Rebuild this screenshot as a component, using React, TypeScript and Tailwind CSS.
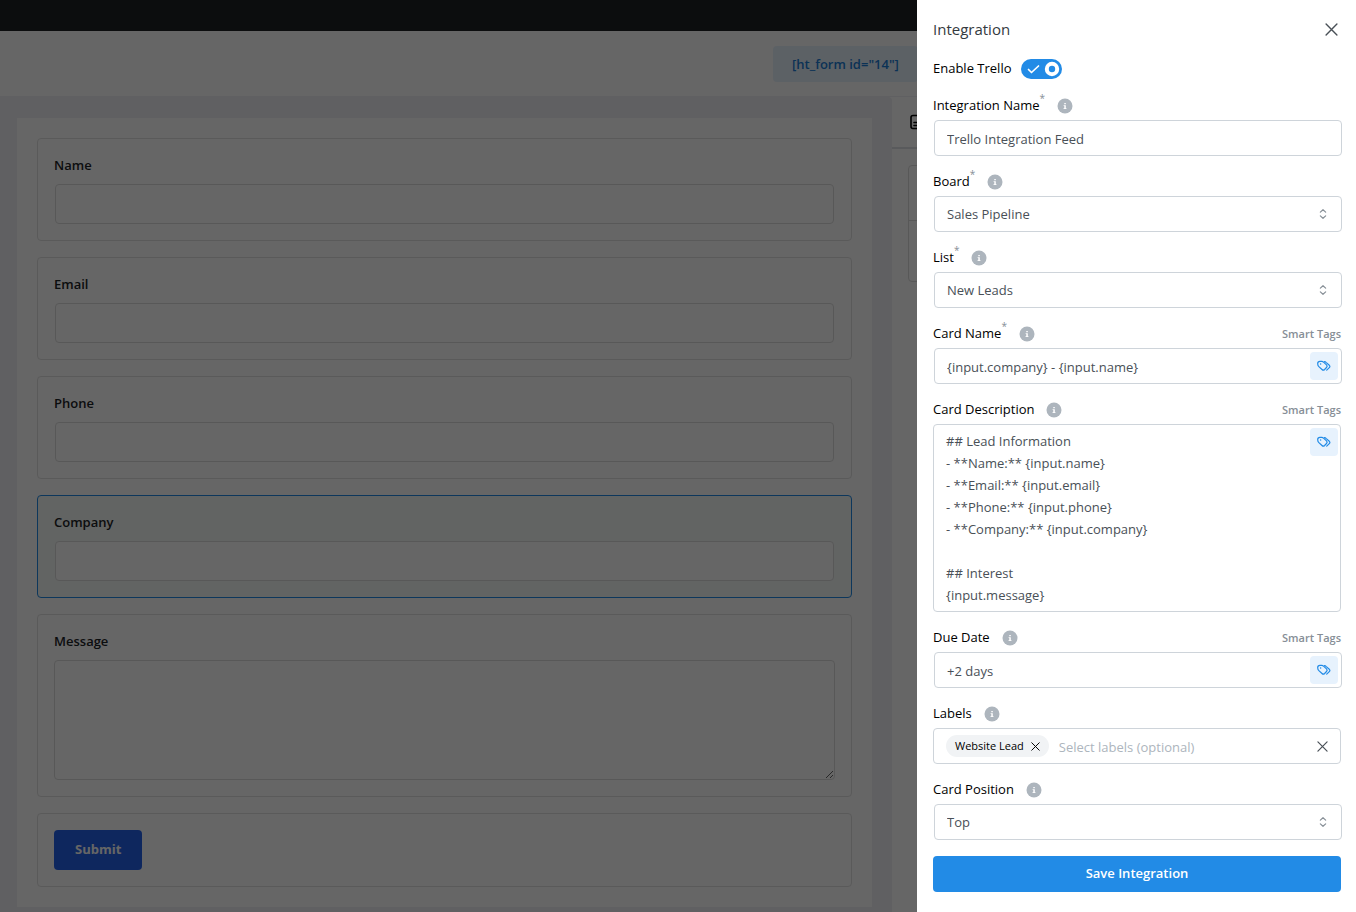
import { useState } from 'react';
import type { ReactNode } from 'react';

interface FieldProps {
  id: string;
  label: string;
  required?: boolean;
  smartTags?: boolean;
  children: ReactNode;
}

const FORM_FIELDS = [
  { id: 'name', label: 'Name', active: false },
  { id: 'email', label: 'Email', active: false },
  { id: 'phone', label: 'Phone', active: false },
  { id: 'company', label: 'Company', active: true },
];

const DESCRIPTION = `## Lead Information
- **Name:** {input.name}
- **Email:** {input.email}
- **Phone:** {input.phone}
- **Company:** {input.company}

## Interest
{input.message}`;

const CloseIcon = ({ size }: { size: number }) => (
  <svg width={size} height={size} viewBox="0 0 12 12" fill="none" stroke="currentColor" strokeWidth="1.3" strokeLinecap="round">
    <path d="M1 1l10 10M11 1L1 11" />
  </svg>
);

const InfoIcon = () => (
  <svg width="16" height="16" viewBox="0 0 16 16" className="shrink-0">
    <circle cx="8" cy="8" r="7.5" fill="#adb5bd" />
    <path d="M7.3 5h1.5v1.3H7.3zM6.6 7.2h2.2v3h.7v.9H6.5v-.9h.8V8.1h-.7z" fill="#fff" />
  </svg>
);

const TagsIcon = () => (
  <svg width="16" height="16" viewBox="0 0 16 16" fill="none" stroke="currentColor" strokeWidth="1.2" strokeLinecap="round" strokeLinejoin="round">
    <path d="M1.7 5.6c0-1.3.8-2.2 2.2-2.2h1.9c.8 0 1.2.2 1.7.7l3 2.8c.9.9.9 1.7 0 2.6l-1.9 2c-.9.9-1.7.9-2.6 0L2.6 8.400c-.7-.7-.9-1.200-.9-2.800z" />
    <path d="M8.300 3.600c.9.1 1.400.4 2 1l3 2.700c.8.8.8 1.500 0 2.300l-2.600 2.500" />
    <path d="M4.600 6h.01" strokeWidth="1.500" />
  </svg>
);

function Field({ id, label, required, smartTags, children }: FieldProps) {
  return (
    <div className="flex flex-col gap-1">
      <div className="flex h-5 items-center">
        <label htmlFor={id} className="flex items-start text-black">
          {label}
          {required && <span className="-mt-1 text-[10px] leading-3 text-[#868e96]">*</span>}
        </label>
        <span className="ml-3">
          <InfoIcon />
        </span>
        {smartTags && <span className="ml-auto pt-px text-[11px] font-semibold text-[#868e96]">Smart Tags</span>}
      </div>
      {children}
    </div>
  );
}

function TextBox({ id, value, tags }: { id: string; value: string; tags?: boolean }) {
  return (
    <div className="-mr-px ml-px flex h-9 items-center rounded border border-[#ced4da] bg-white pl-3 pr-[3px]">
      <input id={id} defaultValue={value} className="h-full min-w-0 flex-1 pt-px text-[#495057] outline-none" />
      {tags && (
        <button aria-label="Smart Tags" className="flex size-7 items-center justify-center rounded bg-[#e7f2fd] text-[#228be6]">
          <TagsIcon />
        </button>
      )}
    </div>
  );
}

function SelectBox({ id, value }: { id: string; value: string }) {
  return (
    <div className="relative -mr-px ml-px">
      <select
        id={id}
        defaultValue={value}
        className="block h-9 w-full appearance-none rounded border border-[#ced4da] bg-white px-3 pt-[2px] text-[#495057] outline-none"
      >
        <option>{value}</option>
      </select>
      <svg
        width="16"
        height="16"
        viewBox="0 0 15 15"
        fill="none"
        stroke="#868e96"
        strokeWidth="1.1"
        strokeLinecap="round"
        strokeLinejoin="round"
        className="pointer-events-none absolute right-[11px] top-[10px]"
      >
        <path d="M5 5.75L7.500 3.500L10 5.750M5 9.250L7.500 11.500L10 9.250" />
      </svg>
    </div>
  );
}

function FormBuilder() {
  return (
    <div className="flex h-full flex-col bg-white">
      <div className="h-[31px] shrink-0 bg-[#1e2124]" />

      {/* Header */}
      <div className="flex h-[66px] shrink-0 items-center justify-end border-b border-[#f0f0f5]">
        <div className="w-[583px]">
          <span className="inline-block rounded bg-[#e7f2fd] px-[19px] py-2 text-[13px] font-semibold leading-5 text-[#1c7ed6]">
            [ht_form id="14"]
          </span>
        </div>
      </div>

      <div className="flex min-h-0 flex-1">
        {/* Canvas */}
        <div className="min-w-0 flex-1 overflow-hidden rounded-tr bg-[#efeff4] pl-[17px] pr-5 pt-[21px]">
          <div className="flex flex-col gap-4 bg-white p-5">
            {FORM_FIELDS.map((field) => (
              <div
                key={field.id}
                className={`rounded border p-4 ${field.active ? 'border-[#228be6] bg-[#f5faf7]' : 'border-[#e0e0e0]'}`}
              >
                <label htmlFor={field.id} className="block pb-2 font-semibold leading-[21px] text-[#1d2327]">
                  {field.label}
                </label>
                <div className="px-px">
                  <input id={field.id} className="block h-10 w-full rounded border border-[#dcdcdc] bg-white px-3" />
                </div>
              </div>
            ))}
            <div className="rounded border border-[#e0e0e0] p-4">
              <label htmlFor="message" className="block pb-2 font-semibold leading-[21px] text-[#1d2327]">
                Message
              </label>
              <textarea id="message" className="block h-[120px] w-full rounded border border-[#dcdcdc] bg-white px-3" />
            </div>
            <div className="rounded border border-[#e0e0e0] p-4">
              <button className="block h-10 rounded bg-[#2563eb] px-[21px] font-bold text-white">Submit</button>
            </div>
          </div>
        </div>

        {/* Settings panel */}
        <div className="w-[464px] shrink-0 bg-white">
          <div className="flex h-[52px] items-center border-b-2 border-[#dee2e6] pl-4">
            <svg width="18" height="18" viewBox="0 0 18 18" fill="none" stroke="#000" strokeWidth="1.6" strokeLinecap="round">
              <rect x="3" y="2.5" width="12" height="13" rx="2" />
              <path d="M6 9.5h6M6 12.5h6" />
            </svg>
          </div>
          <div className="m-4 rounded border border-[#dcdcdc]">
            <div className="h-[55px] border-b border-[#dcdcdc]" />
            <div className="h-[60px]" />
          </div>
        </div>
      </div>
    </div>
  );
}

export default function App() {
  const [enabled, setEnabled] = useState(true);
  const [labels, setLabels] = useState(['Website Lead']);

  return (
    <div className="h-screen overflow-hidden font-['Segoe_UI','Open_Sans','Noto_Sans',sans-serif] text-[13px]">
      <FormBuilder />
      <div className="fixed inset-0 bg-black/60" />

      {/* Drawer */}
      <aside className="fixed inset-y-0 right-0 w-[439px] overflow-hidden bg-white pl-4 pr-[15px] pt-4">
        <div className="mb-4 flex h-[27px] items-center justify-between">
          <h2 className="text-[15px] text-[#343a40]">Integration</h2>
          <button aria-label="Close" className="mr-[3px] text-[#495057]">
            <CloseIcon size={13} />
          </button>
        </div>

        <div className="mb-[17px] flex h-5 items-center gap-[9px]">
          <label htmlFor="enable" className="text-black">Enable Trello</label>
          <span className="relative inline-block h-5 w-[41px]">
            <input
              id="enable"
              type="checkbox"
              role="switch"
              checked={enabled}
              onChange={(e) => setEnabled(e.target.checked)}
              className="block h-5 w-[41px] appearance-none rounded-full bg-[#ced4da] checked:bg-[#228be6]"
            />
            <svg width="41" height="20" viewBox="0 0 41 20" fill="none" className="pointer-events-none absolute inset-0">
              <path d="M7.5 10.500l3 3L17.500 7" stroke="#fff" strokeWidth="1.700" strokeLinecap="round" strokeLinejoin="round" />
              <circle cx="31" cy="10" r="5.200" stroke="#fff" strokeWidth="4" />
            </svg>
          </span>
        </div>

        <div className="flex flex-col gap-4">
          <Field id="feed" label="Integration Name" required>
            <TextBox id="feed" value="Trello Integration Feed" />
          </Field>
          <Field id="board" label="Board" required>
            <SelectBox id="board" value="Sales Pipeline" />
          </Field>
          <Field id="list" label="List" required>
            <SelectBox id="list" value="New Leads" />
          </Field>
          <Field id="card-name" label="Card Name" required smartTags>
            <TextBox id="card-name" value="{input.company} - {input.name}" tags />
          </Field>
          <Field id="card-description" label="Card Description" smartTags>
            <div className="relative">
              <textarea
                id="card-description"
                defaultValue={DESCRIPTION}
                className="block h-[188px] w-full resize-none overflow-hidden rounded border border-[#ced4da] px-3 py-[5px] leading-[22px] text-[#495057] outline-none"
              />
              <button
                aria-label="Smart Tags"
                className="absolute right-[3px] top-1 flex size-7 items-center justify-center rounded bg-[#e7f2fd] text-[#228be6]"
              >
                <TagsIcon />
              </button>
            </div>
          </Field>
          <Field id="due-date" label="Due Date" smartTags>
            <TextBox id="due-date" value="+2 days" tags />
          </Field>
          <Field id="labels" label="Labels">
            <div className="flex h-9 items-center gap-[10px] rounded border border-[#ced4da] px-3">
              {labels.map((label) => (
                <span key={label} className="flex h-[22px] items-center gap-[7px] rounded-full bg-[#f1f3f5] px-[9px] text-[11px] text-black">
                  {label}
                  <button aria-label={`Remove ${label}`} onClick={() => setLabels(labels.filter((l) => l !== label))}>
                    <CloseIcon size={9} />
                  </button>
                </span>
              ))}
              <input
                id="labels"
                placeholder="Select labels (optional)"
                className="h-full min-w-0 flex-1 pt-px outline-none placeholder:text-[#adb5bd]"
              />
              <button aria-label="Clear labels" className="text-[#495057]" onClick={() => setLabels([])}>
                <CloseIcon size={11} />
              </button>
            </div>
          </Field>
          <Field id="position" label="Card Position">
            <SelectBox id="position" value="Top" />
          </Field>
          <button className="h-9 rounded bg-[#228be6] font-semibold text-white">Save Integration</button>
        </div>
      </aside>
    </div>
  );
}
